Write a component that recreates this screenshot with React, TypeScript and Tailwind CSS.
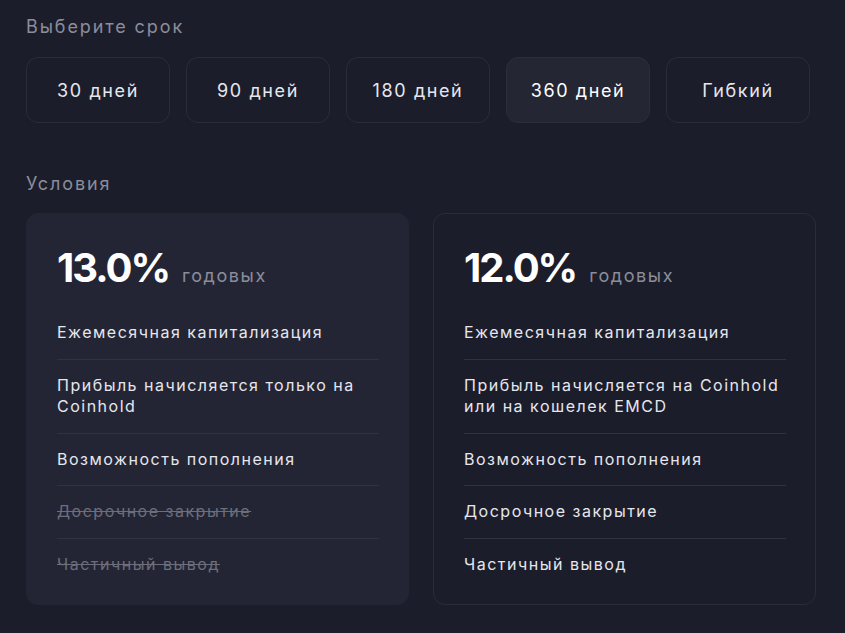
import React from 'react';

type Feature = { text: string; off?: boolean };

const periods = ['30 дней', '90 дней', '180 дней', '360 дней', 'Гибкий'];

const plans: { rate: string; active: boolean; features: Feature[] }[] = [
    {
        rate: '13.0%',
        active: true,
        features: [
            { text: 'Ежемесячная капитализация' },
            { text: 'Прибыль начисляется только на Coinhold' },
            { text: 'Возможность пополнения' },
            { text: 'Досрочное закрытие', off: true },
            { text: 'Частичный вывод', off: true },
        ],
    },
    {
        rate: '12.0%',
        active: false,
        features: [
            { text: 'Ежемесячная капитализация' },
            { text: 'Прибыль начисляется на Coinhold или на кошелек EMCD' },
            { text: 'Возможность пополнения' },
            { text: 'Досрочное закрытие' },
            { text: 'Частичный вывод' },
        ],
    },
];

export default function App() {
    return (
        <div className="min-h-screen w-full bg-[#1c1d2b] px-[26px] pt-[16px] font-['Inter',sans-serif] text-[#e6e7ee]">
            <h3 className="text-[18px] leading-[22px] tracking-[1.9px] text-[#8b8d9a]">Выберите срок</h3>

            <div className="mt-[19px] flex gap-4">
                {periods.map((p, i) => (
                    <button
                        key={p}
                        className={`flex h-[66px] w-[144px] items-center justify-center rounded-xl border text-[18px] tracking-[1.6px] ${
                            i === 3 ? 'border-[#2b2d3b] bg-[#252634] text-white' : 'border-[#2a2c3a] bg-transparent text-[#e6e7ee]'
                        }`}
                    >
                        {p}
                    </button>
                ))}
            </div>

            <h3 className="mt-[50px] text-[18px] leading-[22px] tracking-[1.9px] text-[#8b8d9a]">Условия</h3>

            <div className="mt-[18px] grid w-[790px] grid-cols-2 gap-[24px]">
                {plans.map((plan) => (
                    <div
                        key={plan.rate}
                        className={`rounded-xl border px-[30px] pt-[30px] pb-[14px] ${
                            plan.active ? 'border-[#242534] bg-[#242534]' : 'border-[#2a2c3a] bg-transparent'
                        }`}
                    >
                        <div className="flex items-baseline gap-[13px]">
                            <span className="text-[40px] font-bold leading-[48px] tracking-[-2px] text-white">{plan.rate}</span>
                            <span className="text-[18px] tracking-[1.6px] text-[#8b8d9a]">годовых</span>
                        </div>
                        <ul className="mt-[15px] w-[322px]">
                            {plan.features.map((f, idx) => (
                                <li
                                    key={f.text}
                                    className={`py-[15px] text-[16px] leading-[21.5px] tracking-[1.5px] ${
                                        idx < plan.features.length - 1 ? 'border-b border-[#30323f]' : ''
                                    } ${f.off ? 'text-[#6c6e7b] line-through' : 'text-[#e6e7ee]'}`}
                                >
                                    {f.text}
                                </li>
                            ))}
                        </ul>
                    </div>
                ))}
            </div>
        </div>
    );
}
